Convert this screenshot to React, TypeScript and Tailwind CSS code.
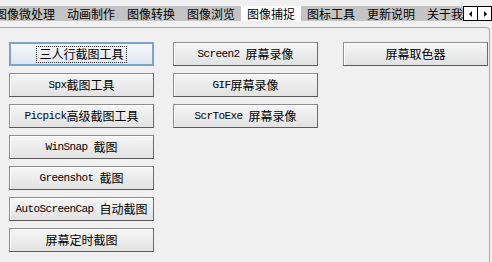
import React from "react";

const CJK = '"Noto Sans CJK SC", "Noto Sans CJK TC", sans-serif';

function Label({ text }: { text: string }) {
  // split into latin and CJK runs
  const parts: { t: string; latin: boolean }[] = [];
  for (const ch of text) {
    const latin = /[\x00-\x7F]/.test(ch);
    const last = parts[parts.length - 1];
    if (last && last.latin === latin) last.t += ch;
    else parts.push({ t: ch, latin });
  }
  return (
    <>
      {parts.map((p, i) =>
        p.latin ? (
          <span
            key={i}
            className="text-[11px] tracking-[-0.6px] whitespace-pre"
            style={{ fontFamily: '"Liberation Mono", monospace' }}
          >
            {p.t}
          </span>
        ) : (
          <span key={i} className="text-[12px]" style={{ fontFamily: CJK }}>
            {p.t}
          </span>
        )
      )}
    </>
  );
}

function Btn({ text, focused }: { text: string; focused?: boolean }) {
  return (
    <div
      className={
        "h-[24px] w-[145px] flex items-center justify-center text-black leading-none " +
        (focused
          ? "border-2 border-[#7da2ce] bg-gradient-to-b from-[#f5f8fc] to-[#dfe6ef]"
          : "border border-[#8e8e8e] border-r-[#6a6a6a] border-b-[#5a5a5a] bg-gradient-to-b from-[#f6f6f6] to-[#e2e2e2] shadow-[inset_1px_1px_0_#ffffff]")
      }
    >
      {focused ? (
        <span className="border border-dotted border-[#333] px-[2px] h-[17px] flex items-center">
          <Label text={text} />
        </span>
      ) : (
        <span className="flex items-center">
          <Label text={text} />
        </span>
      )}
    </div>
  );
}

const tabs = ["图像微处理", "动画制作", "图像转换", "图像浏览", "图像捕捉", "图标工具", "更新说明", "关于我们"];

export default function App() {
  const col1 = ["三人行截图工具", "Spx截图工具", "Picpick高级截图工具", "WinSnap 截图", "Greenshot 截图", "AutoScreenCap 自动截图", "屏幕定时截图"];
  const col2 = ["Screen2 屏幕录像", "GIF屏幕录像", "ScrToExe 屏幕录像"];
  const col3 = ["屏幕取色器"];
  return (
    <div className="w-[492px] h-[262px] bg-[#f0f0f0] overflow-hidden relative" style={{ fontFamily: CJK }}>
      {/* tab strip */}
      <div className="pt-[6px] relative">
        <div className="h-[15px] bg-[#c4c4c4] flex overflow-hidden">
          <div className="flex ml-[-11px]">
            {tabs.map((t) => (
              <div
                key={t}
                className={
                  "px-[6px] text-[12px] leading-[15px] text-black whitespace-nowrap " +
                  (t === "图像捕捉" ? "bg-white" : "")
                }
              >
                {t}
              </div>
            ))}
          </div>
        </div>
        <div className="absolute right-0 top-[6px] flex">
          <div className="w-[15px] h-[15px] bg-white border border-black flex items-center justify-center">
            <svg width="4" height="6" viewBox="0 0 4 6"><path d="M3 0 L0 3 L3 6 Z" fill="#000" /></svg>
          </div>
          <div className="w-[14px] h-[15px] bg-white border border-black border-l-0 flex items-center justify-center">
            <svg width="4" height="6" viewBox="0 0 4 6"><path d="M1 0 L4 3 L1 6 Z" fill="#000" /></svg>
          </div>
        </div>
      </div>
      {/* panel */}
      <div className="mt-[6px] w-[490px] h-[240px] border-t border-r border-[#a7a7a7] rounded-tr-[4px] pt-[14px] flex items-start">
        <div className="ml-[9px] flex flex-col gap-[7px]">
          {col1.map((t, i) => (
            <Btn key={t} text={t} focused={i === 0} />
          ))}
        </div>
        <div className="ml-[19px] flex flex-col gap-[7px]">
          {col2.map((t) => (
            <Btn key={t} text={t} />
          ))}
        </div>
        <div className="ml-[25px] flex flex-col gap-[7px]">
          {col3.map((t) => (
            <Btn key={t} text={t} />
          ))}
        </div>
      </div>
    </div>
  );
}
